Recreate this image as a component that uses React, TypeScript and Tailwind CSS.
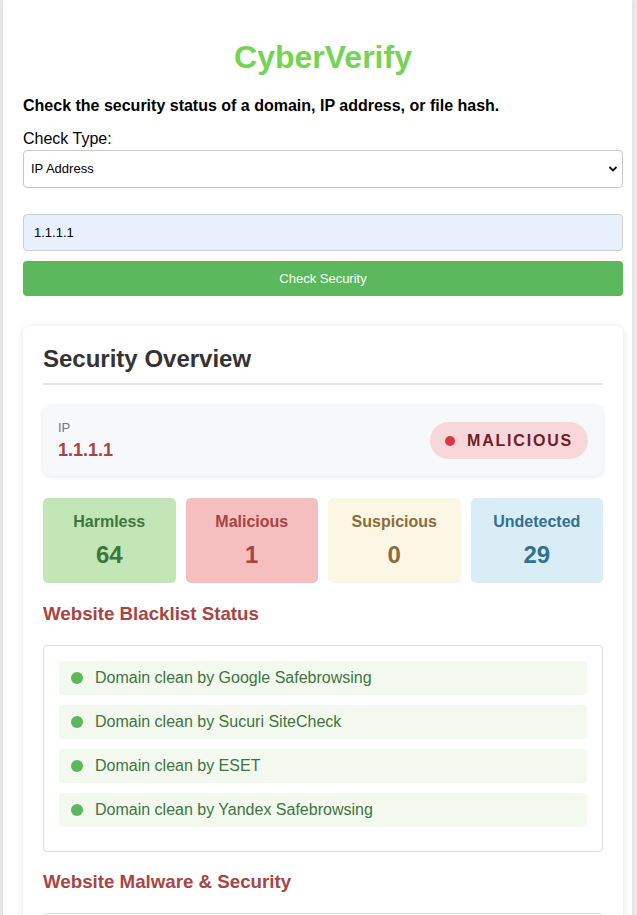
import React from 'react';

const stats = [
  { label: 'Harmless', value: 64, box: 'bg-[#c3e6b7]', text: 'text-[#3c763d]' },
  { label: 'Malicious', value: 1, box: 'bg-[#f5bfbf]', text: 'text-[#a94442]' },
  { label: 'Suspicious', value: 0, box: 'bg-[#fcf7e4]', text: 'text-[#8a6d3b]' },
  { label: 'Undetected', value: 29, box: 'bg-[#d9edf7]', text: 'text-[#31708f]' },
];

const blacklist = [
  'Domain clean by Google Safebrowsing',
  'Domain clean by Sucuri SiteCheck',
  'Domain clean by ESET',
  'Domain clean by Yandex Safebrowsing',
];

export default function App() {
  return (
    <div className="min-h-screen bg-[#ececec] pl-[3px] pr-[5px] font-['Liberation_Sans',Arial,sans-serif]">
      <div className="min-h-screen bg-white pl-5 pr-[9px] pt-[37px] shadow-[0_0_6px_rgba(0,0,0,0.08)]">
        {/* header */}
        <h1 className="text-center text-[32px] font-bold leading-[40px] text-[#77d353]">CyberVerify</h1>
        <p className="mt-[19px] text-[16px] font-bold leading-[20px] text-black">
          Check the security status of a domain, IP address, or file hash.
        </p>

        {/* form */}
        <label className="mt-[14px] block text-[16px] leading-[18px] text-black">Check Type:</label>
        <div className="relative mt-[2px]">
          <select
            defaultValue="ip"
            className="h-[38px] w-full appearance-none rounded-[4px] border border-[#c8c8c8] bg-white px-[7px] text-[13px] text-black"
          >
            <option value="domain">Domain</option>
            <option value="ip">IP Address</option>
            <option value="hash">File Hash</option>
          </select>
          <svg
            className="pointer-events-none absolute right-[5px] top-[15px]"
            width="10"
            height="8"
            viewBox="0 0 10 8"
          >
            <path d="M1.5 2 L5 5.5 L8.5 2" stroke="#111" strokeWidth="1.8" fill="none" />
          </svg>
        </div>

        <input
          defaultValue="1.1.1.1"
          className="mt-[26px] block h-[37px] w-full rounded-[4px] border border-[#cfcfcf] bg-[#e8f0fe] px-[10px] text-[13px] text-black outline-none"
        />
        <button className="mt-[10px] block h-[35px] w-full rounded-[4px] bg-[#5cb85c] text-[13px] text-white">
          Check Security
        </button>

        {/* results card */}
        <div className="mt-[30px] rounded-[8px] bg-white px-5 pb-5 pt-[18px] shadow-[0_1px_8px_rgba(0,0,0,0.1)]">
          <h2 className="border-b-2 border-[#e8e8e8] pb-[9px] text-[24px] font-bold leading-[30px] text-[#333]">
            Security Overview
          </h2>

          <div className="mt-[20px] flex items-center justify-between rounded-[8px] bg-[#f7f8fa] px-[15px] py-[15px] shadow-[0_1px_4px_rgba(0,0,0,0.1)]">
            <div>
              <div className="text-[13px] leading-[16px] text-[#777]">IP</div>
              <div className="mt-[3px] text-[18px] font-bold leading-[22px] text-[#a94442]">1.1.1.1</div>
            </div>
            <div className="flex h-[37px] items-center gap-[12px] rounded-full bg-[#f8d7da] pl-[15px] pr-[15px]">
              <span className="h-[10px] w-[10px] rounded-full bg-[#dc3545]" />
              <span className="text-[16px] font-bold tracking-[1.8px] text-[#721c24]">MALICIOUS</span>
            </div>
          </div>

          <div className="mt-[22px] grid grid-cols-4 gap-[10px]">
            {stats.map((s) => (
              <div key={s.label} className={`flex h-[85px] flex-col items-center rounded-[5px] pt-[15px] ${s.box} ${s.text}`}>
                <div className="text-[16px] font-bold leading-[18px]">{s.label}</div>
                <div className="mt-[10px] text-[24px] font-bold leading-[28px]">{s.value}</div>
              </div>
            ))}
          </div>

          <h3 className="mt-[20px] text-[18.72px] font-bold leading-[22px] text-[#a94442]">Website Blacklist Status</h3>
          <div className="mt-[20px] flex flex-col gap-[10px] rounded-[4px] border border-[#dddddd] px-[15px] pb-[24px] pt-[15px]">
            {blacklist.map((b) => (
              <div key={b} className="flex h-[34px] items-center gap-[12px] rounded-[4px] bg-[#f4f9f0] px-[12px]">
                <span className="h-[12px] w-[12px] rounded-full bg-[#5cb85c]" />
                <span className="text-[16px] text-[#3c763d]">{b}</span>
              </div>
            ))}
          </div>

          <h3 className="mt-[19px] text-[18.72px] font-bold leading-[22px] text-[#a94442]">Website Malware &amp; Security</h3>
          <div className="mt-[20px] h-[120px] rounded-[4px] border border-[#dddddd]" />
        </div>
      </div>
    </div>
  );
}
